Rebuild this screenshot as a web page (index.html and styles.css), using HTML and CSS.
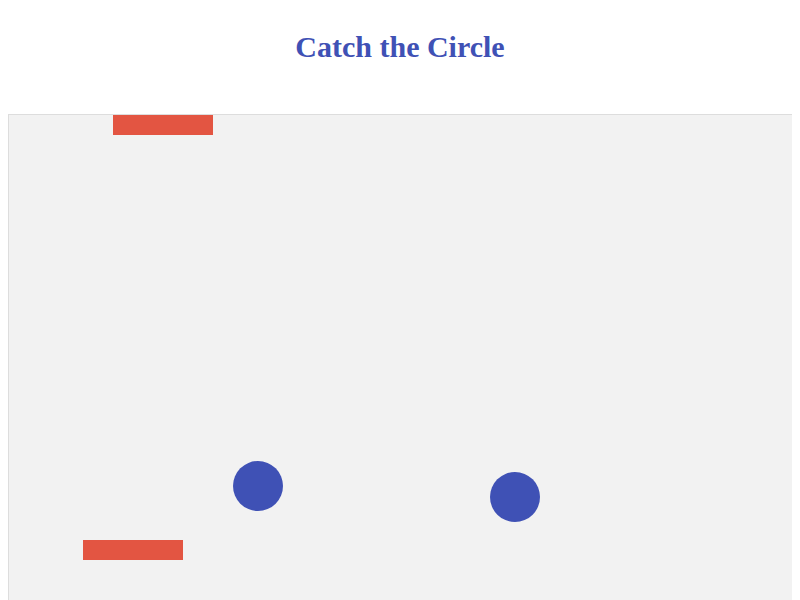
FILE: index.html
```html
<!DOCTYPE html>
<html lang="en">
<head>
    <meta charset="UTF-8">
    <meta name="viewport" content="width=device-width, initial-scale=1.0">
    <title>Catch the Circle</title>
    <link rel="stylesheet" href="styles.css">
</head>
<body>

    <h1 class="title">Catch the Circle</h1>

    <div class="board" id="board">
        <div class="paddle" style="left: 104px; top: 0px;"></div>
        <div class="paddle" style="left: 74px; top: 425px;"></div>
        <div class="ball" style="left: 224px; top: 346px;"></div>
        <div class="ball" style="left: 481px; top: 357px;"></div>
    </div>

</body>
</html>
```

FILE: styles.css
```css
body {
    font-family: "Liberation Serif", "Times New Roman", serif;
    background-color: #ffffff;
    margin: 8px;
}

/* Heading */
.title {
    color: #3f51b5;
    text-align: center;
    font-size: 30px;
    font-weight: bold;
    margin: 22px 0 50px;
}

/* Play field */
.board {
    position: relative;
    width: 784px;
    height: 500px;
    background-color: #f2f2f2;
    border: 1px solid #dddddd;
    overflow: hidden;
}

.paddle {
    position: absolute;
    width: 100px;
    height: 20px;
    background-color: #e35542;
}

.ball {
    position: absolute;
    width: 50px;
    height: 50px;
    border-radius: 50%;
    background-color: #3f51b5;
}
```
